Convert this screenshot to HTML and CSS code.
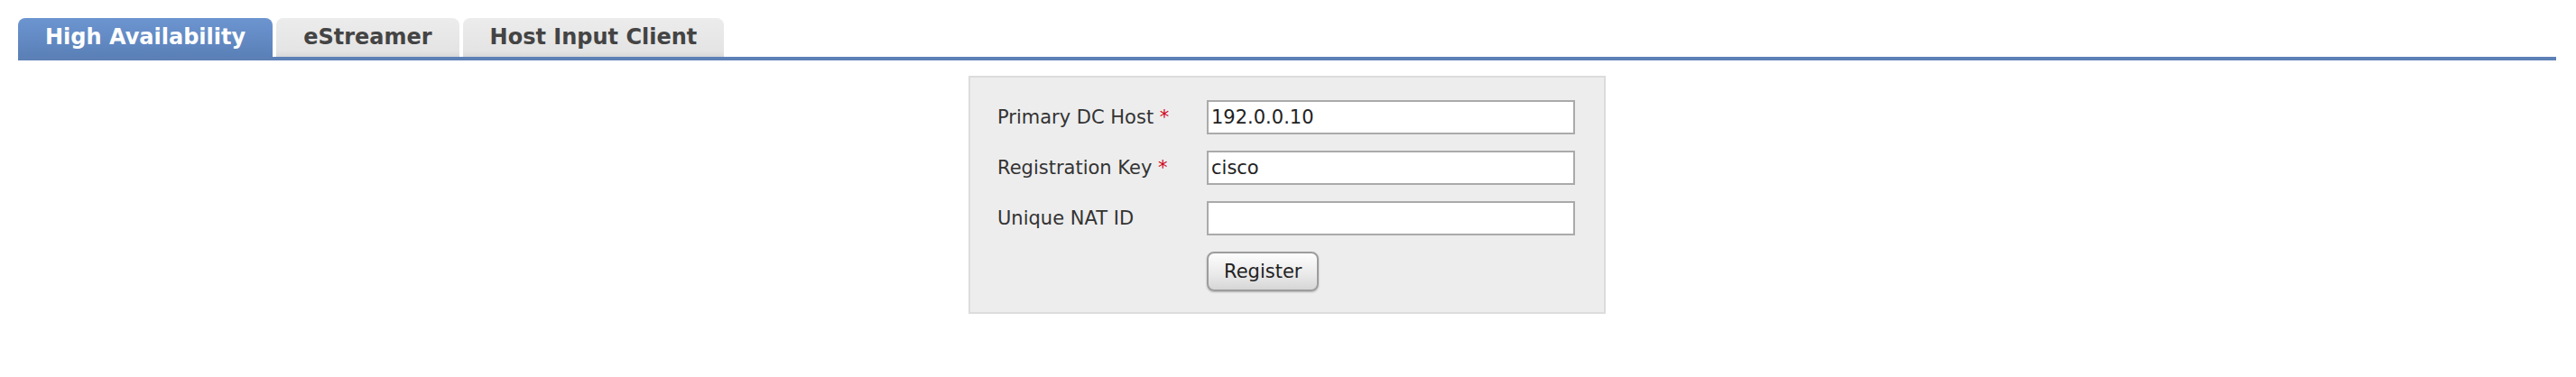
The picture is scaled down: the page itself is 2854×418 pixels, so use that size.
FILE: index.html
```html
<!DOCTYPE html>
<html>
<head>
  <title>Integration</title>
  <link rel="stylesheet" href="styles.css">
</head>
<body>
<div class="page">
  <div class="tabs">
    <div class="tab active">High Availability</div>
    <div class="tab">eStreamer</div>
    <div class="tab">Host Input Client</div>
  </div>
  <form class="panel" id="register">
    <label for="host">Primary DC Host <span class="req">*</span></label>
    <input type="text" id="host" value="192.0.0.10">
    <label for="key">Registration Key <span class="req">*</span></label>
    <input type="text" id="key" value="cisco">
    <label for="nat">Unique NAT ID</label>
    <input type="text" id="nat">
    <div></div>
    <div><button class="button" type="submit">Register</button></div>
  </form>
</div>
</body>
</html>
```
FILE: styles.css
```css
html, body {
  margin: 0;
  background: #fff;
  font-family: "DejaVu Sans", Verdana, sans-serif;
}
.page {
  padding: 20px 22px 0 20px;
}
.tabs {
  display: flex;
  gap: 4px;
  border-bottom: 4px solid #5d80b6;
}
.tab {
  height: 43px;
  line-height: 43px;
  padding: 0 30px;
  font-size: 24px;
  font-weight: bold;
  color: #444;
  border-radius: 8px 8px 0 0;
  background: linear-gradient(to bottom, #ececec, #e4e4e4 85%, #d8d8d8);
}
.tab.active {
  color: #fff;
  background: linear-gradient(to bottom, #6c95d0, #5b80b8);
}
.panel {
  box-sizing: border-box;
  width: 706px;
  margin: 17px auto 0;
  padding: 25px 32px 23px 30px;
  background: #ededed;
  border: 2px solid #dcdcdc;
  display: grid;
  grid-template-columns: 232px 408px;
  row-gap: 18px;
  align-items: center;
}
label {
  font-size: 21px;
  color: #333;
}
.req {
  color: #d0021b;
}
input {
  box-sizing: border-box;
  height: 38px;
  width: 408px;
  margin: 0;
  padding: 0 3px;
  border: 2px solid #aaa;
  background: #fff;
  font-family: "DejaVu Sans", Verdana, sans-serif;
  font-size: 21px;
  color: #222;
  outline: none;
}
.button {
  height: 44px;
  padding: 0 17px;
  font-family: "DejaVu Sans", Verdana, sans-serif;
  font-size: 21px;
  color: #222;
  border: 2px solid #9d9d9d;
  border-radius: 8px;
  background: linear-gradient(to bottom, #fdfdfd, #e9e9e9 60%, #d6d6d6);
  box-shadow: 0 1px 2px rgba(0,0,0,0.25);
  cursor: pointer;
}
```
